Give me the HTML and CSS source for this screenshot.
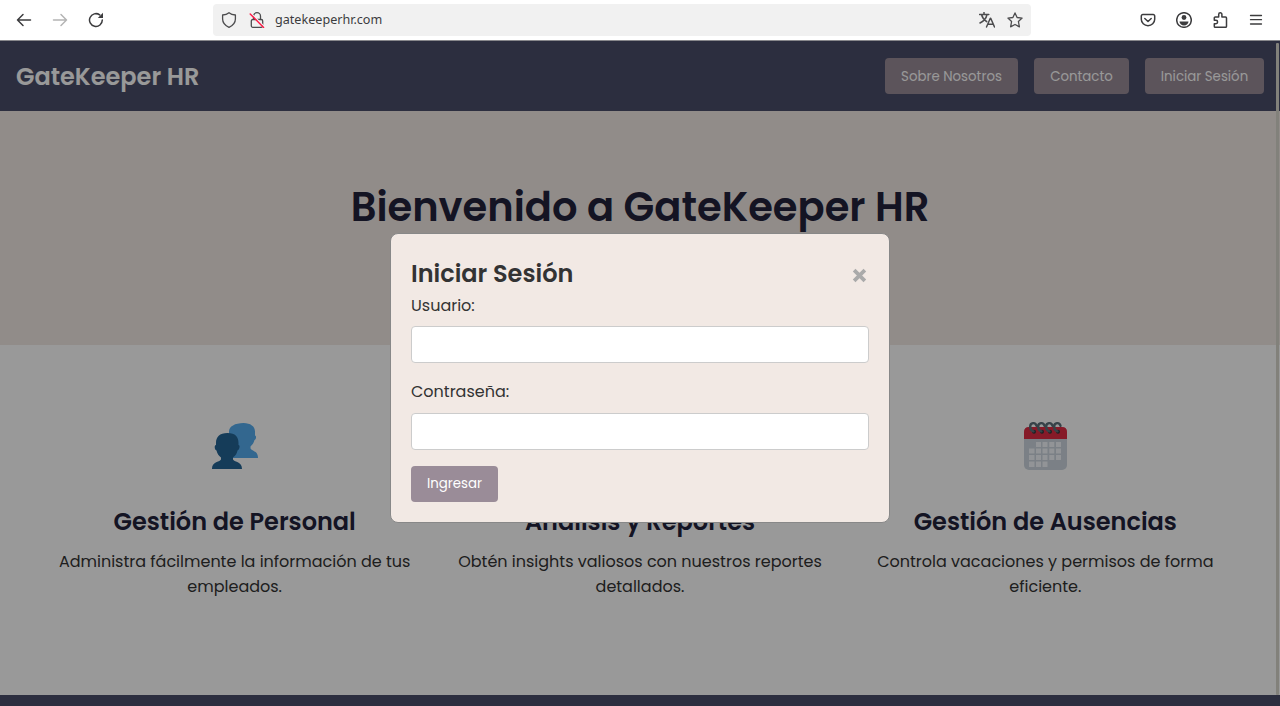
FILE: index.html
```html
<!DOCTYPE html>
<html lang="es">
<head>
<meta charset="utf-8">
<title>GateKeeper HR</title>
<link rel="stylesheet" href="styles.css">
</head>
<body>
<div class="browser">
  <div class="nav-icons">
    <svg class="icon" viewBox="0 0 16 16"><path d="M14.500 8H1.500M7 2.500 1.500 8 7 13.500"/></svg>
    <svg class="icon faded" viewBox="0 0 16 16"><path d="M1.500 8h13M9 2.500 14.500 8 9 13.500"/></svg>
    <svg class="icon" viewBox="0 0 16 16"><path d="M14.300 8A6.400 6.400 0 1 1 11.700 2.900"/><path class="solid" d="M15 .8v5.200H9.800z"/></svg>
  </div>
  <div class="address">
    <svg class="icon thin" viewBox="0 0 16 16"><path d="M8 .7C6.500 2 4 2.900 1.600 3v4c0 3.700 2.600 6.600 6.400 8.300 3.800-1.700 6.400-4.600 6.400-8.300V3C12 2.900 9.500 2 8 .7z"/></svg>
    <svg class="icon thin lock" viewBox="0 0 16 16"><path d="M4.500 7.500V4.200a3.500 3.500 0 0 1 7 0v3.300M3.800 7.500h8.400a1.500 1.500 0 0 1 1.500 1.500v4.800a1.500 1.500 0 0 1-1.500 1.500H3.800a1.500 1.500 0 0 1-1.500-1.500V9a1.500 1.500 0 0 1 1.500-1.500z"/><path class="halo" d="M2 1.200 15 14.200"/><path class="slash" d="M1.200 2 14.600 15.400"/></svg>
    <span class="url">gatekeeperhr.com</span>
    <svg class="icon translate" viewBox="0 0 16 16"><path d="M.5 2.500h9.300M5 .5v2M8 2.500C7.300 6 4.500 9.300 1 11M2.500 2.500c.7 3 2.700 5.500 5.200 7.200M7.500 15l3.800-8.700h.4l3.800 8.700M8.800 12.200h5.400"/></svg>
    <svg class="icon thin" viewBox="0 0 16 16"><path d="m8 .9 2.100 4.600 5 .6-3.700 3.400 1 5.300L8 12.500l-4.400 2.300 1-5.300L.9 6.100l5-.6z"/></svg>
  </div>
  <div class="tools">
    <svg class="icon tool" viewBox="0 0 16 16"><path d="M2.800 2.500h10.400a1.500 1.500 0 0 1 1.500 1.500v3.300a6.700 6.400 0 0 1-13.400 0V4a1.500 1.500 0 0 1 1.500-1.500zM4.800 6.500 8 9.500l3.200-3"/></svg>
    <svg class="icon tool" viewBox="0 0 16 16"><circle cx="8" cy="8" r="7.300"/><circle class="solid" cx="8" cy="5.500" r="2.400"/><path class="solid" d="M3.500 9.500h9c0 2.200-2 4-4.500 4s-4.500-1.800-4.500-4z"/></svg>
    <svg class="icon tool" viewBox="0 0 16 16"><path d="M6.700 5V2.400a1.600 1.600 0 0 1 3.200 0V5h3.600a1 1 0 0 1 1 1v8.300a1 1 0 0 1-1 1H3.300a1 1 0 0 1-1-1v-2.600h1.600a1.700 1.700 0 0 0 0-3.400H2.300V6a1 1 0 0 1 1-1z"/></svg>
    <svg class="icon tool menu-icon" viewBox="0 0 16 16"><path d="M2.500 3.500h11M2.500 7.700h11M2.500 12h11"/></svg>
  </div>
</div>
<div class="page">
  <header class="header">
    <div class="brand">GateKeeper HR</div>
    <nav class="menu">
      <button class="button nav-button about">Sobre Nosotros</button>
      <button class="button nav-button contact">Contacto</button>
      <button class="button nav-button login">Iniciar Sesión</button>
    </nav>
  </header>
  <section class="hero"><h1 class="hero-title">Bienvenido a GateKeeper HR</h1></section>
  <main class="features">
    <article class="feature">
      <svg class="picture" viewBox="0 0 70 70"><path fill="#55acee" d="M43.500 13c7 0 11.500 3.500 11.500 8.500v4c1.500 0 1.500 4-.5 4.500-.8 3-2 4.500-4 6.500v2c2 3 7.500 2.500 7.500 9.500H29V21.500c0-5 6-8.500 14.500-8.500z"/><path fill="#236494" d="M27.500 23C19.500 23 16 27 16 33v2c-2 0-1.500 5 .5 5.500.7 3 2 5 4.500 7v2c-2 3-9 2-9 9.500h30c0-7.500-7-6.500-9-9.500v-2c2.500-2 4-4 4.500-7 2-.5 3-5.500 1-5.500v-2c0-6-3-10-11-10z"/></svg>
      <h2 class="feature-title">Gestión de Personal</h2>
      <p class="feature-text">Administra fácilmente la información de tus<br>empleados.</p>
    </article>
    <article class="feature">
      <div class="picture"></div>
      <h2 class="feature-title">Análisis y Reportes</h2>
      <p class="feature-text">Obtén insights valiosos con nuestros reportes<br>detallados.</p>
    </article>
    <article class="feature">
      <svg class="picture" viewBox="0 0 70 70"><rect x="14" y="17" width="43" height="43" rx="5" fill="#cdd6df"/><path d="M14 29v-7q0-5 5-5h33q5 0 5 5v7z" fill="#e02c44"/><path fill="#f8fbff" d="M26 32h5v5h-5zm6.500 0h5v5h-5zm6.800 0h5v5h-5zm6.700 0h5v5h-5zM19 38.500h5.500v5H19zm7 0h5v5h-5zm6.500 0h5v5h-5zm6.800 0h5v5h-5zm6.700 0h5v5h-5zM19 45h5.500v5H19zm7 0h5v5h-5zm6.500 0h5v5h-5zm6.800 0h5v5h-5zm6.700 0h5v5h-5zM19 51.500h5.500v5.500H19zm7 0h5v5.500h-5zm6.500 0h5v5.500h-5z" opacity=".9"/><g fill="#30373c"><circle cx="24" cy="21.700" r="2"/><circle cx="32" cy="21.700" r="2"/><circle cx="40" cy="21.700" r="2"/><circle cx="48" cy="21.700" r="2"/></g><path class="rings" d="M26.500 15.800c-1-4-6.300-3.300-6.300.7 0 2.800 1.300 4.300 3.300 4.800M34.500 15.800c-1-4-6.300-3.300-6.300.7 0 2.800 1.300 4.300 3.300 4.800M42.500 15.800c-1-4-6.300-3.300-6.300.7 0 2.800 1.300 4.300 3.300 4.800M50.500 15.800c-1-4-6.300-3.300-6.300.7 0 2.800 1.300 4.300 3.300 4.800"/></svg>
      <h2 class="feature-title">Gestión de Ausencias</h2>
      <p class="feature-text">Controla vacaciones y permisos de forma<br>eficiente.</p>
    </article>
  </main>
  <footer class="footer"></footer>
  <div class="overlay">
    <form class="modal">
      <div class="modal-head"><h2 class="modal-title">Iniciar Sesión</h2><svg class="close" viewBox="0 0 14 14"><path d="m2 2 10 10M12 2 2 12"/></svg></div>
      <label class="label user" for="usuario">Usuario:</label>
      <input class="field" id="usuario" type="text">
      <label class="label" for="clave">Contraseña:</label>
      <input class="field" id="clave" type="password">
      <button class="button submit" type="button">Ingresar</button>
    </form>
  </div>
  <div class="scrollbar"></div>
</div>
</body>
</html>
```
FILE: styles.css
```css
* { box-sizing: border-box; }
body { margin: 0; height: 706px; overflow: hidden; display: flex; flex-direction: column; color: #333; font-family: Poppins, Inter, sans-serif; }
h1, h2, p { margin: 0; }
.browser { height: 41px; flex: none; display: flex; align-items: flex-start; padding: 4px 16px 0; background: #fff; border-bottom: 1px solid #88888c; }
.nav-icons { width: 197px; height: 32px; display: flex; align-items: center; gap: 20px; }
.icon { width: 16px; height: 16px; flex: none; fill: none; stroke: #3c3c3e; stroke-width: 1.5; stroke-linejoin: round; stroke-linecap: round; }
.thin { stroke-width: 1.3; stroke: #4c4c4e; }
.faded { stroke: #b4b4b4; }
.solid { fill: #3c3c3e; stroke: none; }
.halo { stroke: #f0f0f0; stroke-width: 1.5; }
.slash { stroke: #ff1744; stroke-width: 1.4; }
.address { width: 818px; height: 32px; padding: 0 8px; display: flex; align-items: center; border-radius: 4px; background: #f1f1f1; }
.lock { margin-left: 12px; }
.url { flex: 1; margin-left: 10px; color: #3c3c3e; font: 12.6px/20px "Noto Sans", sans-serif; }
.translate { margin-right: 12px; stroke: #4c4c4e; }
.tools { height: 32px; margin-left: auto; display: flex; align-items: center; gap: 20px; }
.menu-icon { stroke-width: 1.3; }
.page { position: relative; flex: 1; display: flex; flex-direction: column; }
.header { height: 70px; padding: 0 16px; display: flex; align-items: center; justify-content: space-between; background: #4a4e69; color: #fff; }
.brand { font-size: 24px; font-weight: 600; }
.menu { display: flex; gap: 16px; }
.button { height: 36px; padding: 0; border: 0; border-radius: 4px; background: #9a8c98; color: #fff; font: 13.333px Poppins, Inter, sans-serif; white-space: nowrap; }
.nav-button { padding-top: 1px; }
.about { width: 133px; }
.contact { width: 95px; }
.login { width: 119px; }
.hero { height: 234px; padding-top: 64px; background: #f2e9e4; text-align: center; }
.hero-title { color: #22223b; font-size: 40px; line-height: 64px; font-weight: 600; }
.features { height: 350px; padding: 64px 32px; display: grid; grid-template-columns: repeat(3, 1fr); background: #fff; text-align: center; }
.feature { display: flex; flex-direction: column; align-items: center; }
.picture { width: 70px; height: 70px; margin: 1px 0 23px; }
.rings { fill: none; stroke: #5c6e78; stroke-width: 2.4; stroke-linecap: round; }
.feature-title { color: #22223b; font-size: 24px; font-weight: 600; line-height: 38px; white-space: nowrap; }
.feature-text { margin-top: 8px; font-size: 16px; line-height: 25px; white-space: nowrap; }
.footer { flex: 1; background: #4a4e69; }
.overlay { position: absolute; inset: 0; padding-top: 192px; background: rgba(0, 0, 0, .4); }
.modal { width: 500px; height: 290px; margin: 0 auto; padding: 20px; display: flex; flex-direction: column; border: 1px solid #888; border-radius: 8px; background: #f2e9e4; }
.modal-head { height: 38px; display: flex; justify-content: space-between; align-items: center; }
.modal-title { padding-top: 2px; font-size: 24px; font-weight: 600; line-height: 38px; }
.close { width: 15px; height: 15px; margin: 5px 2px 0 0; fill: none; stroke: #aaa; stroke-width: 3.5; }
.label { height: 26px; margin-bottom: 8px; font-size: 16px; line-height: 26px; }
.user { padding-top: 1px; }
.field { width: 100%; height: 37px; flex: none; margin: 0 0 16px; padding: 8px; border: 1px solid #ccc; border-radius: 4px; background: #fff; }
.submit { width: 87px; flex: none; }
.scrollbar { position: absolute; top: 2px; right: 1px; width: 3px; height: 652px; border-radius: 1px; background: #82817b; }
```
